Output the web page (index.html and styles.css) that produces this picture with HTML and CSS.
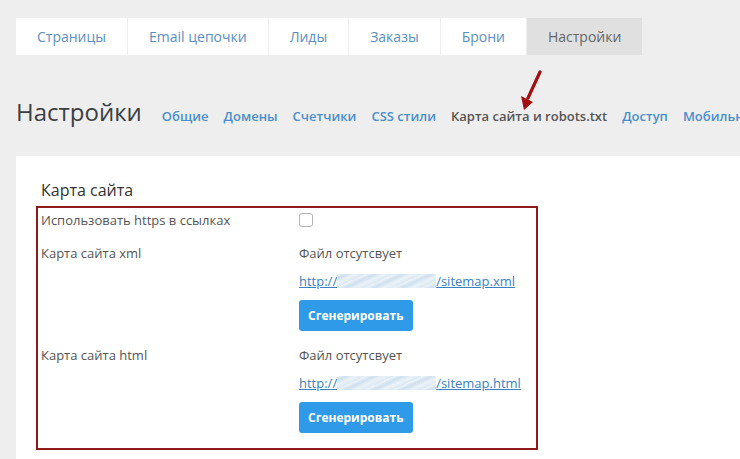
FILE: index.html
```html
<!DOCTYPE html>
<html lang="ru">
<head>
    <meta charset="UTF-8">
    <meta name="viewport" content="width=device-width, initial-scale=1.0">
    <title>Настройки</title>
    <link rel="stylesheet" href="styles.css">
</head>
<body>
    <div class="tabs">
        <a class="tab">Страницы</a>
        <a class="tab">Email цепочки</a>
        <a class="tab">Лиды</a>
        <a class="tab">Заказы</a>
        <a class="tab">Брони</a>
        <a class="tab active">Настройки</a>
    </div>

    <div class="page-head">
        <h1>Настройки</h1>
        <nav class="subnav">
            <a>Общие</a>
            <a>Домены</a>
            <a>Счетчики</a>
            <a>CSS стили</a>
            <a class="current">Карта сайта и robots.txt</a>
            <a>Доступ</a>
            <a>Мобильная версия</a>
        </nav>
    </div>

    <!-- annotation arrow -->
    <svg class="arrow" width="30" height="42" viewBox="0 0 30 42">
        <line x1="24" y1="2" x2="12" y2="28" stroke="#a30f0f" stroke-width="3.2" stroke-linecap="round"/>
        <polygon points="5,26 17,32 8,40" fill="#a30f0f"/>
    </svg>

    <div class="card">
        <h2>Карта сайта</h2>
        <div class="box">
            <div class="row">
                <div class="label">Использовать https в ссылках</div>
                <div class="value"><input type="checkbox" class="check"></div>
            </div>
            <div class="row">
                <div class="label">Карта сайта xml</div>
                <div class="value">
                    <p>Файл отсутсвует</p>
                    <a class="link">http://<span class="blur"></span>/sitemap.xml</a>
                    <button class="btn">Сгенерировать</button>
                </div>
            </div>
            <div class="row">
                <div class="label">Карта сайта html</div>
                <div class="value">
                    <p>Файл отсутсвует</p>
                    <a class="link">http://<span class="blur"></span>/sitemap.html</a>
                    <button class="btn">Сгенерировать</button>
                </div>
            </div>
        </div>
    </div>
</body>
</html>
```

FILE: styles.css
```css
body {
    margin: 0;
    background-color: #eeeeee;
    font-family: 'Open Sans', 'Liberation Sans', sans-serif;
    color: #555;
    position: relative;
    overflow: hidden;
    height: 459px;
}
a {
    cursor: pointer;
}
/* Top tabs */
.tabs {
    display: flex;
    gap: 1px;
    margin: 18px 0 0 16px;
}
.tab {
    display: block;
    height: 37px;
    line-height: 37px;
    padding: 0 21px;
    background-color: #fff;
    color: #5b8fc3;
    font-size: 14px;
}
.tab.active {
    background-color: #e0e0e0;
    color: #666;
}
/* Page heading */
.page-head {
    display: flex;
    align-items: baseline;
    margin: 40px 0 0 16px;
    white-space: nowrap;
}
.page-head h1 {
    margin: 0 20px 0 0;
    font-size: 24px;
    font-weight: 400;
    color: #3b3f44;
}
.subnav {
    display: flex;
    gap: 15px;
}
.subnav a {
    font-size: 13px;
    font-weight: 600;
    color: #4a8fcc;
}
.subnav a.current {
    color: #555;
}
.arrow {
    position: absolute;
    left: 516px;
    top: 70px;
}
/* Card */
.card {
    background-color: #fff;
    margin: 28px 0 0 16px;
    padding: 24px 0 0 20px;
    height: 300px;
}
.card h2 {
    margin: 0 0 6px 5px;
    font-size: 16px;
    font-weight: 400;
    color: #333;
    line-height: 20px;
}
.box {
    width: 495px;
    border: 2px solid #8e1a1a;
    padding: 2px 0 15px 3px;
}
.row {
    display: flex;
    font-size: 13px;
    line-height: 20px;
}
.row + .row {
    margin-top: 14px;
}
.row:nth-child(2) {
    margin-top: 13px;
}
.label {
    width: 258px;
    flex: none;
}
.value {
    display: flex;
    flex-direction: column;
    align-items: flex-start;
}
.value p {
    margin: 0 0 8px;
}
.check {
    appearance: none;
    -webkit-appearance: none;
    width: 14px;
    height: 14px;
    margin: 3px 0 0;
    border: 1px solid #b5b5b5;
    border-radius: 3px;
    background: #fff;
}
.link {
    color: #3b7fc4;
    text-decoration: underline;
    margin-bottom: 9px;
}
.blur {
    display: inline-block;
    width: 99px;
    height: 14px;
    vertical-align: -2px;
    background: repeating-linear-gradient(155deg, #eef4fa 0px, #c9dcec 4px, #e9f1f8 8px, #d6e5f1 12px);
    opacity: 0.9;
}
.btn {
    height: 31px;
    padding: 0 9px;
    border: none;
    border-radius: 3px;
    background-color: #2f9be8;
    color: #fff;
    font-family: inherit;
    font-size: 12px;
    font-weight: 700;
    cursor: pointer;
}
```
